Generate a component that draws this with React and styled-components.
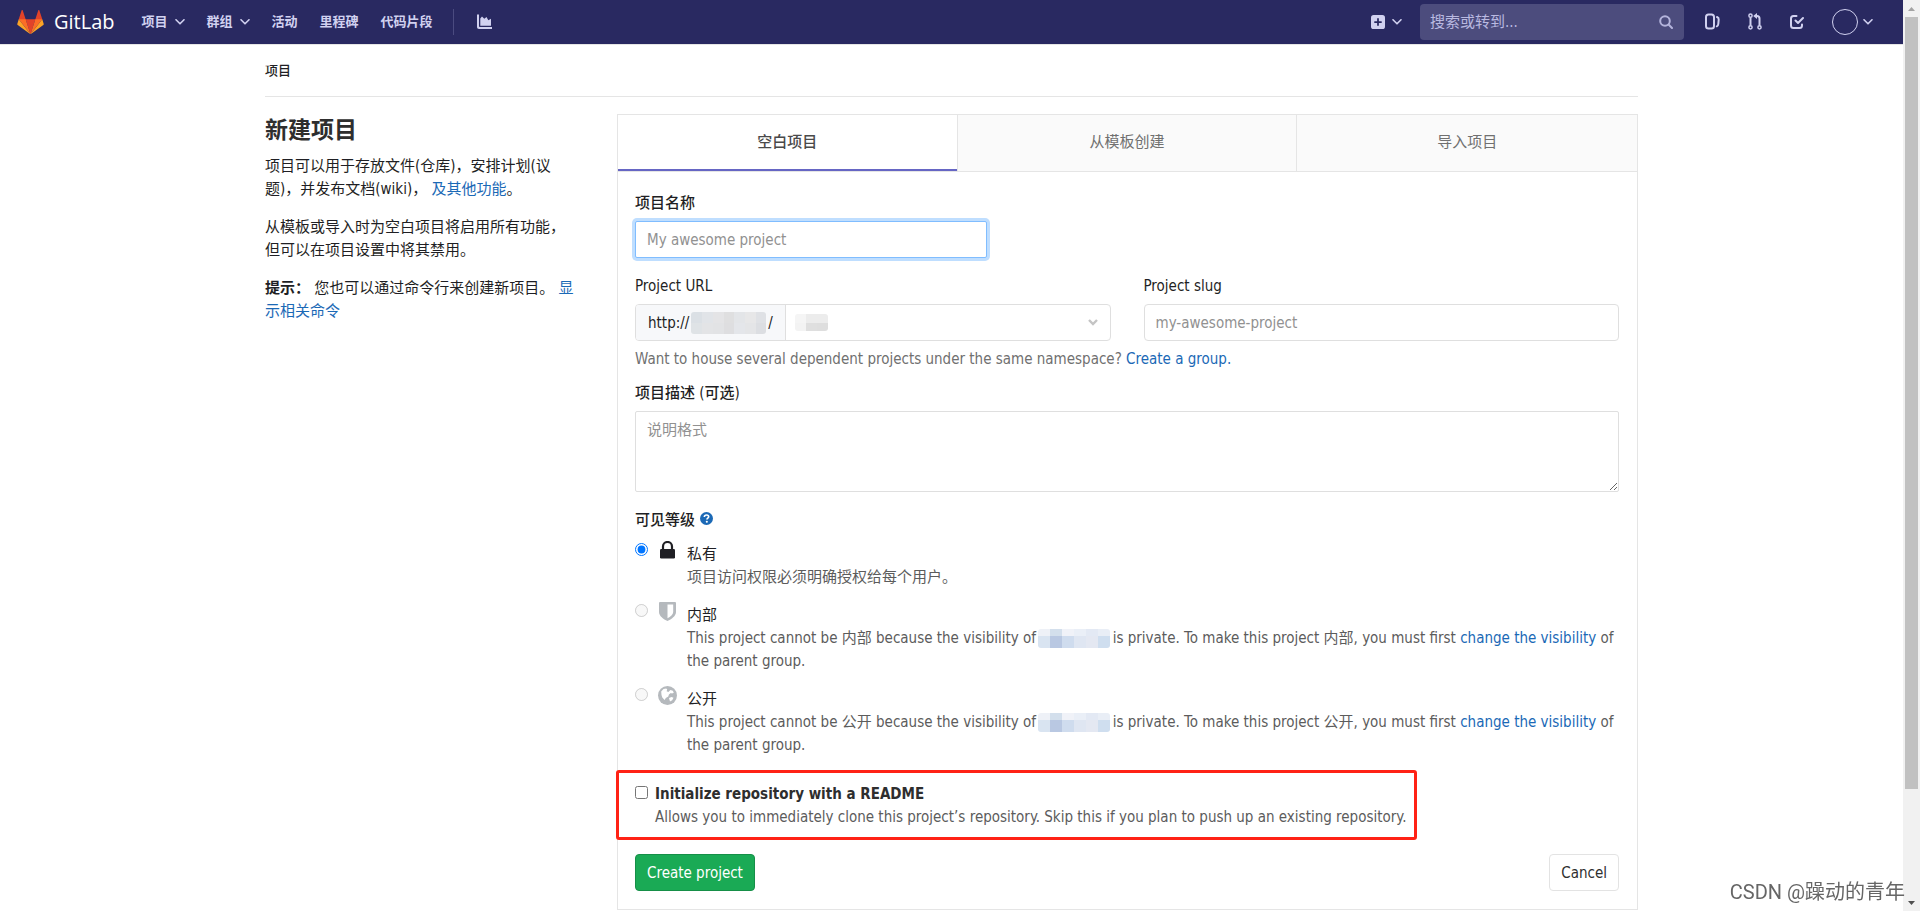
import React from 'react';
import styled, { createGlobalStyle, css } from 'styled-components';

const fonts = '"DejaVu Sans Condensed", "Noto Sans CJK SC", sans-serif';

const GlobalStyle = createGlobalStyle`
  *, *::before, *::after { box-sizing: border-box; }
  body {
    margin: 0;
    background: #fff;
    color: #1f1f24;
    font: 15px/23px ${fonts};
  }
  button, input, textarea, select { font: inherit; color: inherit; }
  a { color: #1b69b6; text-decoration: none; }
  p { margin: 0; }
`;

const Page = styled.div`
  min-height: 100vh;
  padding-right: 17px;
`;

/* ---------- navigation bar ---------- */

const Navbar = styled.header`
  display: flex;
  align-items: center;
  justify-content: space-between;
  height: 45px;
  padding: 0 30px 1px 17px;
  background: #292961;
  border-bottom: 1px solid #e5e5e5;
  color: #d1d1f0;
`;

const NavGroup = styled.nav`
  display: flex;
  align-items: center;
`;

const Brand = styled.a`
  display: flex;
  align-items: center;
  gap: 10px;
  margin-right: 27px;
  color: #fff;
  font: 20px/24px "Open Sans", sans-serif;
`;

const NavLink = styled.a`
  display: flex;
  align-items: center;
  gap: 7px;
  margin-right: 22px;
  color: #d1d1f0;
  font-size: 13px;
  font-weight: 700;
  white-space: nowrap;
`;

const NavDivider = styled.span`
  width: 1px;
  height: 26px;
  margin: 0 23px 0 -2px;
  background: #4b4b80;
`;

const NavButton = styled.button`
  display: flex;
  align-items: center;
  gap: ${(p) => p.$gap || 7}px;
  padding: 0;
  border: 0;
  background: none;
  color: #d1d1f0;
`;

const SearchBox = styled.label`
  display: flex;
  align-items: center;
  width: 264px;
  height: 36px;
  margin: 0 21px 0 18px;
  padding: 0 11px 0 10px;
  border-radius: 4px;
  background: #4c4c7d;
  color: #b4b4dc;
`;

const SearchInput = styled.input.attrs({ type: 'search' })`
  flex: 1;
  min-width: 0;
  padding: 2px 0 0;
  border: 0;
  outline: 0;
  background: none;
  &::placeholder { color: #b9b9e0; opacity: 1; }
`;

const IconRow = styled.div`
  display: flex;
  align-items: center;
  gap: 28px;
`;

const Avatar = styled.span`
  width: 26px;
  height: 26px;
  border: 1px solid #d1d1f0;
  border-radius: 50%;
`;

/* ---------- content ---------- */

const Container = styled.div`
  max-width: 1373px;
  margin: 0 auto;
`;

const Breadcrumb = styled.div`
  height: 52px;
  padding-top: 14px;
  border-bottom: 1px solid #e5e5e5;
  font-size: 13px;
  font-weight: 500;
`;

const Columns = styled.main`
  display: grid;
  grid-template-columns: 310px minmax(0, 1fr);
  gap: 42px;
  padding-top: 17px;
`;

const Sidebar = styled.aside`
  display: flex;
  flex-direction: column;
  gap: 15px;
  padding-top: 1px;
`;

const Title = styled.h1`
  margin: 0 0 -5px;
  font-size: 23px;
  line-height: 30px;
  font-weight: 700;
  color: #2e2e2e;
`;

const Panel = styled.section`
  border: 1px solid #e5e5e5;
`;

const Tabs = styled.div`
  display: grid;
  grid-template-columns: repeat(3, 1fr);
  border-bottom: 1px solid #e5e5e5;
`;

const Tab = styled.button`
  height: 56px;
  padding: 0 0 1px;
  border: 0;
  border-right: 1px solid #e5e5e5;
  background: #fafafa;
  color: #707070;
  &:last-child { border-right: 0; }
  ${(p) => p.$active && css`
    background: #fff;
    color: #4a4a4a;
    font-weight: 500;
    box-shadow: inset 0 -2px #6666c4;
  `}
`;

const Form = styled.form`
  padding: 20px 18px 18px 17px;
`;

const Field = styled.div`
  margin-bottom: ${(p) => p.$gap || 17}px;
`;

const Label = styled.label`
  display: block;
  margin-bottom: 6px;
  font-weight: 500;
`;

const control = css`
  display: block;
  width: 100%;
  height: 37px;
  padding: 1px 11px 0;
  border: 1px solid #dfdfdf;
  border-radius: 4px;
  background: #fff;
  outline: 0;
  &::placeholder { color: #919191; opacity: 1; }
`;

const TextInput = styled.input.attrs({ type: 'text' })`
  ${control}
  ${(p) => p.$active && css`
    width: 352px;
    border-color: #80bdff;
    border-radius: 2px;
    box-shadow: 0 0 0 3px #bfdeff;
  `}
`;

const TextArea = styled.textarea`
  ${control}
  height: 81px;
  padding: 7px 11px;
  border-radius: 2px;
  resize: vertical;
`;

const TwoColumns = styled.div`
  display: grid;
  grid-template-columns: 1fr 1fr;
  gap: 33px;
`;

const InputGroup = styled.div`
  display: flex;
  height: 37px;
  border: 1px solid #dfdfdf;
  border-radius: 4px;
`;

const Prefix = styled.span`
  display: flex;
  align-items: center;
  gap: 2px;
  padding: 1px 12px 0;
  border-right: 1px solid #dfdfdf;
  border-radius: 3px 0 0 3px;
  background: #f7f8fa;
`;

const SelectWrap = styled.span`
  display: grid;
  flex: 1;
  align-items: center;
  padding: 0 12px 0 9px;
  > * { grid-area: 1 / 1; }
  > svg { justify-self: end; pointer-events: none; }
`;

const Select = styled.select`
  width: 100%;
  height: 35px;
  border: 0;
  outline: 0;
  background: none;
  appearance: none;
`;

const Help = styled.p`
  margin-top: 7px;
  color: #707070;
`;

const Mosaic = styled.span`
  display: inline-grid;
  grid-auto-flow: column;
  grid-auto-columns: 1fr;
  grid-template-rows: ${(p) => p.$rows};
  width: ${(p) => p.$width}px;
  vertical-align: middle;
  border-radius: 3px;
  overflow: hidden;
`;

const InlineMosaic = styled(Mosaic)`
  margin: 0 -2px;
`;

const Tile = styled.i`
  background: ${(p) => p.$color};
`;

const Legend = styled.div`
  display: flex;
  align-items: center;
  gap: 5px;
  margin-bottom: 8px;
  font-weight: 500;
`;

const Option = styled.div`
  display: grid;
  grid-template-columns: 13px 19px minmax(0, 1fr);
  column-gap: 10px;
  margin-bottom: 12px;
`;

const Radio = styled.input.attrs({ type: 'radio' })`
  width: 13px;
  height: 13px;
  margin: 3px 0 0;
`;

const OptionIcon = styled.span`
  display: flex;
  justify-content: center;
  height: 20px;
  padding-top: 1px;
  color: ${(p) => (p.$muted ? '#b5b9bd' : '#1f1f24')};
`;

const OptionLabel = styled.label`
  display: block;
  padding-top: 3px;
`;

const OptionText = styled.p`
  color: #5c5c5c;
`;

const Readme = styled.div`
  display: grid;
  grid-template-columns: 13px max-content;
  column-gap: 7px;
  width: max-content;
  margin: 13px 0 14px -19px;
  padding: 10px 8px 8px 16px;
  border: 3px solid #ff2215;
  border-radius: 3px;
`;

const Checkbox = styled.input.attrs({ type: 'checkbox' })`
  width: 13px;
  height: 13px;
  margin: 3px 0 0;
`;

const ReadmeLabel = styled.label`
  display: block;
  font-weight: 700;
  color: #2e2e2e;
`;

const Actions = styled.div`
  display: flex;
  justify-content: space-between;
`;

const Button = styled.button`
  height: 37px;
  padding: 1px 11px 0;
  border: 1px solid ${(p) => (p.$primary ? '#168f48' : '#e3e3e3')};
  border-radius: 4px;
  background: ${(p) => (p.$primary ? '#1aaa55' : '#fff')};
  color: ${(p) => (p.$primary ? '#fff' : '#2e2e2e')};
`;

/* ---------- overlays ---------- */

const ScrollTrack = styled.div`
  position: fixed;
  top: 0;
  right: 0;
  bottom: 0;
  display: flex;
  flex-direction: column;
  align-items: center;
  width: 17px;
  padding: 7px 0 6px;
  background: #f1f1f1;
`;

const ScrollThumb = styled.div`
  width: 13px;
  height: 86%;
  margin: 6px 0 auto;
  background: #c1c1c1;
`;

const Watermark = styled.div`
  position: fixed;
  right: 15px;
  bottom: 6px;
  color: #666;
  font: 20px/26px Roboto, "Noto Sans CJK SC", sans-serif;
`;

/* ---------- icons ---------- */

const Svg = ({ size = 16, w, h, box = '0 0 16 16', children }) => (
  <svg width={w || size} height={h || size} viewBox={box} fill="currentColor" aria-hidden="true">{children}</svg>
);

const Chevron = () => (
  <Svg w={10} h={6} box="0 0 10 6"><path d="M1 .8 5 4.8 9 .8" fill="none" stroke="currentColor" strokeWidth="1.6" strokeLinecap="round" strokeLinejoin="round" /></Svg>
);

const Tanuki = () => (
  <Svg w={27} h={25} box="0 0 36 34">
    <path fill="#e24329" d="M2 14l9.38 9v-9l-4-12.28c-.205-.632-1.176-.632-1.38 0zM34 14l-9.38 9v-9l4-12.28c.205-.632 1.176-.632 1.38 0zM18 34.38L11.38 14h13.24z" />
    <path fill="#fc6d26" d="M18 34.38L11.38 14H2l6 7.5zM18 34.38L24.62 14H34l-6 7.5z" />
    <path fill="#fca326" d="M2 14L.1 20.16c-.18.565 0 1.2.5 1.56l17.42 12.66zM34 14l1.9 6.16c.18.565 0 1.2-.5 1.56L18 34.38z" />
  </Svg>
);

const ChartIcon = () => (
  <Svg w={15} h={15} box="0 0 15 15">
    <path d="M0 .5h2v11.7c0 .5.3.8.8.8H15v2H2c-1.200 0-2-.8-2-2z" />
    <path d="M3.300 11.800V4.500L5 2.500l2.300 2.200L9.500 3l1.800 3.200 2.700-1.400v7z" />
  </Svg>
);

const PlusIcon = () => (
  <Svg w={14} h={14}><path fillRule="evenodd" d="M3 0h10a3 3 0 0 1 3 3v10a3 3 0 0 1-3 3H3a3 3 0 0 1-3-3V3a3 3 0 0 1 3-3zm4 7H4.500a1 1 0 0 0 0 2H7v2.500a1 1 0 0 0 2 0V9h2.500a1 1 0 0 0 0-2H9V4.500a1 1 0 0 0-2 0z" /></Svg>
);

const SearchIcon = () => (
  <Svg w={14} h={14} box="0 0 14 14"><g fill="none" stroke="currentColor" strokeWidth="2" strokeLinecap="round"><circle cx="6" cy="6" r="4.800" /><path d="M9.800 9.800 13 13" /></g></Svg>
);

const IssuesIcon = () => (
  <Svg w={15} h={17} box="0 0 15 17">
    <g fill="none" stroke="currentColor" strokeWidth="2" strokeLinecap="round"><rect x="1" y="1.500" width="8" height="14" rx="2.500" /><path d="M12 4c1.300.5 1.800 1.200 1.700 2.500l-.4 4.500c-.1 1.200-.6 1.900-1.500 2.300" /></g>
  </Svg>
);

const MergeIcon = () => (
  <Svg w={14} h={17} box="0 0 14 17">
    <g fill="none" stroke="currentColor" strokeWidth="1.500"><circle cx="2.500" cy="2.700" r="1.600" /><circle cx="2.500" cy="14.300" r="1.600" /><circle cx="11.500" cy="14.300" r="1.600" /><path strokeWidth="2" d="M2.500 4.500v8M11.500 12.500V5.500c0-1.500-.8-2.500-2.500-2.500H8" /></g>
    <path d="M9 0v6L5.200 3z" />
  </Svg>
);

const TodoIcon = () => (
  <Svg w={14} h={16} box="0 0 14 16"><g fill="none" stroke="currentColor" strokeWidth="2" strokeLinecap="round" strokeLinejoin="round"><path d="M6.500 2H3.500C2 2 1 3 1 4.500v7C1 13 2 14 3.500 14h6c1.500 0 2.500-1 2.500-2.500V10.500" /><path d="m5.500 6.500 2.500 2.500L13 4" /></g></Svg>
);

const QuestionIcon = () => (
  <Svg w={13} h={13}><circle cx="8" cy="8" r="8" fill="#1b69b6" /><path d="M5.300 6.200C5.400 4.600 6.500 3.700 8 3.700c1.600 0 2.700.9 2.700 2.200 0 1.700-2.200 1.800-2.200 3.400" fill="none" stroke="#fff" strokeWidth="2" /><circle cx="8.400" cy="12" r="1.300" fill="#fff" /></Svg>
);

const LockIcon = () => (
  <Svg w={15} h={18} box="0 0 15 18"><rect y="8" width="15" height="9.500" rx="1.300" /><path d="M3 9V5.500a4.500 4.500 0 0 1 9 0V9" fill="none" stroke="currentColor" strokeWidth="2.200" /></Svg>
);

const ShieldIcon = () => (
  <Svg w={17} h={19} box="0 0 17 19"><path fillRule="evenodd" d="M1 0h15q1 0 1 1v9c0 4-4.500 7.300-8.500 9C4.500 17.300 0 14 0 10V1q0-1 1-1zm7.500 2.500v13.700c3-1.500 5.700-3.700 5.700-6.300V2.500z" /></Svg>
);

const GlobeIcon = () => (
  <Svg w={19} h={19} box="0 0 19 19">
    <circle cx="9.500" cy="9.500" r="9.500" />
    <path fill="#fff" d="M3.200 5.500 5.500 3l2.700-.6 1 1.200-.6 1.600 1.800.9 2-2.200 2.400.9 1 2-1.800.6-1.200-.5-1.900 1.500-.6 2.200-2.500 1.400-1.200 2-2.300-2.500L3.500 9zM11 12l2.500-1 2 .8-1.300 2.400L12 15.500z" />
  </Svg>
);

/* ---------- parts ---------- */

const groupTiles = [
  ['#eef1f7', '#d9e4f1'], ['#d3dfec', '#b9c8e2'], ['#f0f2f8', '#cfdcee'],
  ['#eaeff7', '#dfe6f2'], ['#e3e9f4', '#e4e8f2'], ['#e9eef6', '#cfdeef'],
];

const GroupMosaic = () => (
  <InlineMosaic $width={72} $rows="7px 12px" aria-hidden="true">
    {groupTiles.flat().map((c, i) => <Tile key={i} $color={c} />)}
  </InlineMosaic>
);

const hostTiles = [
  '#dbe0e5', '#dfe3e6', '#e1e4e8', '#e3e4e6', '#e4e4e6', '#e2e3e5',
  '#dfdfe0', '#dedee0', '#e3e5e8', '#e4e6ea', '#e7e7e8', '#e4e5e7', '#dfe1e5', '#dcdee2',
];
const spaceTiles = ['#f5f5f5', '#f3f3f3', '#ececec', '#dfdfdf', '#ececec', '#dedede'];

const restricted = (name) => (
  <>
    This project cannot be {name} because the visibility of <GroupMosaic /> is private. To make this project {name}, you must first <a href="#visibility">change the visibility</a> of the parent group.
  </>
);

const options = [
  { id: 'private', name: '私有', icon: <LockIcon />, text: '项目访问权限必须明确授权给每个用户。' },
  { id: 'internal', name: '内部', icon: <ShieldIcon />, text: restricted('内部'), disabled: true },
  { id: 'public', name: '公开', icon: <GlobeIcon />, text: restricted('公开'), disabled: true },
];

export default function App() {
  return (
    <Page>
      <GlobalStyle />
      <Navbar>
        <NavGroup>
          <Brand href="#home"><Tanuki />GitLab</Brand>
          <NavLink href="#projects">项目 <Chevron /></NavLink>
          <NavLink href="#groups">群组 <Chevron /></NavLink>
          <NavLink href="#activity">活动</NavLink>
          <NavLink href="#milestones">里程碑</NavLink>
          <NavLink href="#snippets">代码片段</NavLink>
          <NavDivider />
          <NavLink href="#analytics" aria-label="Analytics"><ChartIcon /></NavLink>
        </NavGroup>
        <NavGroup>
          <NavButton aria-label="New"><PlusIcon /><Chevron /></NavButton>
          <SearchBox>
            <SearchInput placeholder="搜索或转到..." aria-label="搜索或转到" />
            <SearchIcon />
          </SearchBox>
          <IconRow>
            <NavButton aria-label="Issues"><IssuesIcon /></NavButton>
            <NavButton aria-label="Merge requests"><MergeIcon /></NavButton>
            <NavButton aria-label="Todos"><TodoIcon /></NavButton>
            <NavButton aria-label="User" $gap={5}><Avatar /><Chevron /></NavButton>
          </IconRow>
        </NavGroup>
      </Navbar>

      <Container>
        <Breadcrumb>项目</Breadcrumb>
        <Columns>
          <Sidebar>
            <Title>新建项目</Title>
            <p>项目可以用于存放文件(仓库)，安排计划(议题)，并发布文档(wiki)， <a href="#features">及其他功能</a>。</p>
            <p>从模板或导入时为空白项目将启用所有功能，但可以在项目设置中将其禁用。</p>
            <p><b>提示：</b> 您也可以通过命令行来创建新项目。 <a href="#command">显示相关命令</a></p>
          </Sidebar>

          <Panel>
            <Tabs role="tablist">
              <Tab role="tab" $active>空白项目</Tab>
              <Tab role="tab">从模板创建</Tab>
              <Tab role="tab">导入项目</Tab>
            </Tabs>
            <Form>
              <Field>
                <Label htmlFor="name">项目名称</Label>
                <TextInput id="name" placeholder="My awesome project" $active />
              </Field>
              <Field $gap={11}>
                <TwoColumns>
                  <div>
                    <Label htmlFor="namespace">Project URL</Label>
                    <InputGroup>
                      <Prefix>
                        http://
                        <Mosaic $width={75} $rows="11px 11px" aria-hidden="true">
                          {hostTiles.map((c, i) => <Tile key={i} $color={c} />)}
                        </Mosaic>
                        /
                      </Prefix>
                      <SelectWrap>
                        <Mosaic $width={33} $rows="9px 8px" aria-hidden="true">
                          {spaceTiles.map((c, i) => <Tile key={i} $color={c} />)}
                        </Mosaic>
                        <Select id="namespace" defaultValue=""><option value="" aria-label="namespace" /></Select>
                        <Svg w={10} h={7} box="0 0 10 7"><path d="m1 1 4 4 4-4" fill="none" stroke="#c4c4c4" strokeWidth="2.400" /></Svg>
                      </SelectWrap>
                    </InputGroup>
                  </div>
                  <div>
                    <Label htmlFor="slug">Project slug</Label>
                    <TextInput id="slug" placeholder="my-awesome-project" />
                  </div>
                </TwoColumns>
                <Help>Want to house several dependent projects under the same namespace? <a href="#group">Create a group.</a></Help>
              </Field>
              <Field>
                <Label htmlFor="description">项目描述 (可选)</Label>
                <TextArea id="description" placeholder="说明格式" />
              </Field>
              <div role="radiogroup" aria-label="可见等级">
                <Legend>可见等级 <a href="#help" aria-label="Help"><QuestionIcon /></a></Legend>
                {options.map((o) => (
                  <Option key={o.id}>
                    <Radio id={o.id} name="visibility" defaultChecked={!o.disabled} disabled={o.disabled} />
                    <OptionIcon $muted={o.disabled}>{o.icon}</OptionIcon>
                    <div>
                      <OptionLabel htmlFor={o.id}>{o.name}</OptionLabel>
                      <OptionText>{o.text}</OptionText>
                    </div>
                  </Option>
                ))}
              </div>
              <Readme>
                <Checkbox id="readme" />
                <div>
                  <ReadmeLabel htmlFor="readme">Initialize repository with a README</ReadmeLabel>
                  <OptionText>Allows you to immediately clone this project’s repository. Skip this if you plan to push up an existing repository.</OptionText>
                </div>
              </Readme>
              <Actions>
                <Button type="submit" $primary>Create project</Button>
                <Button type="button">Cancel</Button>
              </Actions>
            </Form>
          </Panel>
        </Columns>
      </Container>

      <ScrollTrack aria-hidden="true">
        <Svg w={7} h={4} box="0 0 7 4"><path fill="#a3a3a3" d="M0 4 3.500 0 7 4z" /></Svg>
        <ScrollThumb />
        <Svg w={7} h={4} box="0 0 7 4"><path fill="#505050" d="M0 0h7L3.500 4z" /></Svg>
      </ScrollTrack>
      <Watermark>CSDN @躁动的青年</Watermark>
    </Page>
  );
}
